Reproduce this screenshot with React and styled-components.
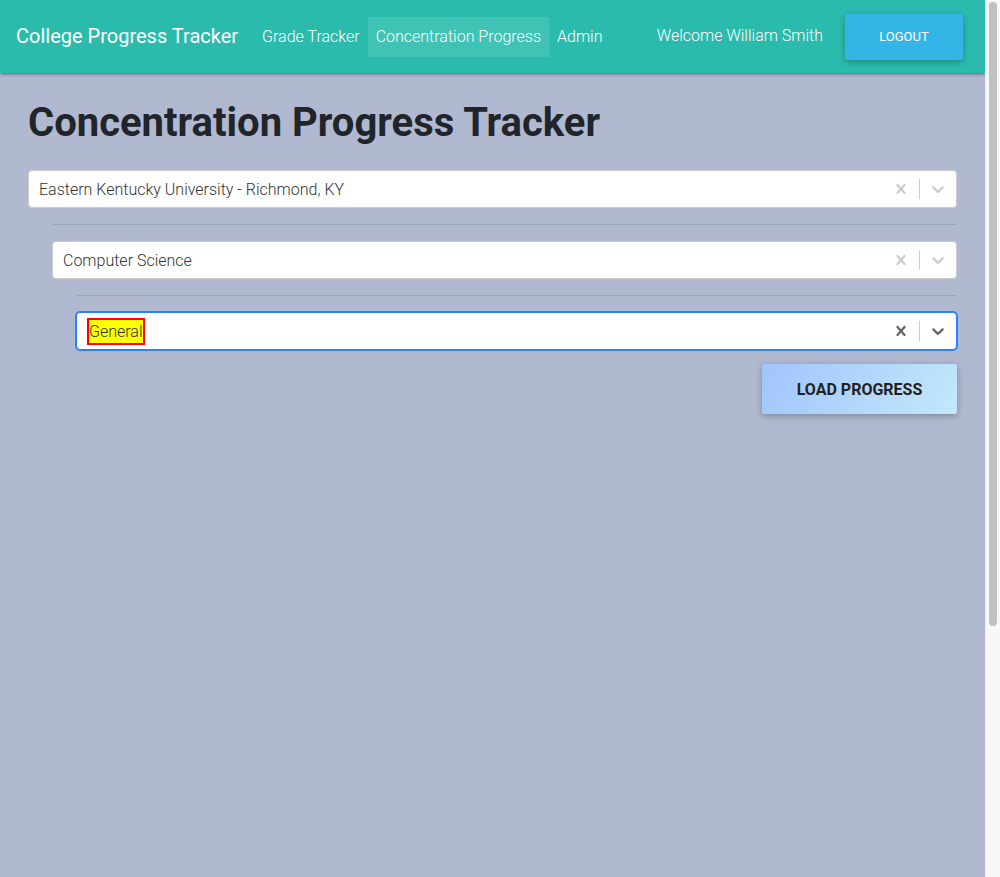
import React from "react";
import styled, { createGlobalStyle } from "styled-components";

const GlobalStyle = createGlobalStyle`
  html, body {
    margin: 0;
    padding: 0;
  }
  body {
    font-family: Roboto, "Liberation Sans", sans-serif;
    background-color: #b0b9d0;
    color: #212529;
    overflow: hidden;
  }
  * {
    box-sizing: border-box;
  }
`;

// the window shows a classic scrollbar gutter on the right
const Frame = styled.div`
  display: flex;
  height: 100vh;
`;

const Page = styled.div`
  flex: 1;
  min-width: 0;
  overflow: hidden;
  background-color: #b0b9d0;
`;

const ScrollTrack = styled.div`
  width: 15px;
  flex-shrink: 0;
  background-color: #f8f8f8;
  border-left: 1px solid #ededed;
  padding: 2px 3px 0 3px;
`;

const ScrollThumb = styled.div`
  height: 624px;
  border-radius: 4px;
  background-color: #c1c1c1;
`;

const Nav = styled.nav`
  height: 73px;
  background-color: #2bbbad;
  display: flex;
  align-items: center;
  padding: 0 22px 0 16px;
  box-shadow: 0 2px 2px 0 rgba(0, 0, 0, 0.14), 0 3px 1px -2px rgba(0, 0, 0, 0.12),
    0 1px 5px 0 rgba(0, 0, 0, 0.2);
  position: relative;
  z-index: 1;
`;

const Brand = styled.a`
  color: #fff;
  font-size: 20px;
  font-weight: 400;
  margin-right: 16px;
  text-decoration: none;
  padding-bottom: 1px;
`;

const NavLinks = styled.div`
  display: flex;
  align-items: center;
`;

const NavLink = styled.a`
  color: #fff;
  font-size: 16px;
  font-weight: 300;
  padding: 0 8px;
  height: 40px;
  line-height: 40px;
  text-decoration: none;
  background-color: ${(p) => (p.$active ? "rgba(255, 255, 255, 0.1)" : "transparent")};
`;

const Spacer = styled.div`
  flex: 1;
`;

const Welcome = styled.span`
  color: #fff;
  font-size: 16px;
  font-weight: 300;
  margin-right: 22px;
  padding-bottom: 2px;
`;

const LogoutButton = styled.button`
  width: 118px;
  height: 46px;
  border: none;
  border-radius: 2px;
  background-color: #33b5e5;
  color: #fff;
  font-family: Roboto, "Liberation Sans", sans-serif;
  font-size: 13px;
  font-weight: 400;
  text-transform: uppercase;
  box-shadow: 0 2px 5px 0 rgba(0, 0, 0, 0.16), 0 2px 10px 0 rgba(0, 0, 0, 0.12);
`;

const Main = styled.main`
  padding: 26px 28px;
`;

const Title = styled.h1`
  margin: 0 0 23px;
  font-size: 40px;
  font-weight: 700;
  line-height: 1.2;
  color: #212529;
`;

const Level = styled.div`
  margin-left: ${(p) => p.$indent}px;
`;

const Divider = styled.hr`
  margin: 16px 0;
  border: 0;
  border-top: 1px solid rgba(0, 0, 0, 0.1);
`;

const Control = styled.div`
  display: flex;
  align-items: center;
  height: 38px;
  background-color: #fff;
  border-radius: 4px;
  border: 1px solid ${(p) => (p.$focused ? "#2684ff" : "hsl(0, 0%, 80%)")};
  box-shadow: ${(p) => (p.$focused ? "0 0 0 1px #2684ff" : "none")};
`;

const ValueBox = styled.div`
  flex: 1;
  padding: 2px 8px;
  display: flex;
  align-items: center;
`;

const Value = styled.span`
  margin: 0 2px;
  font-size: 16px;
  font-weight: 300;
  color: hsl(0, 0%, 20%);
`;

const Highlight = styled.span`
  background-color: #ffff00;
  border: 2px solid #ff0000;
  padding: 2px 0;
  line-height: 19px;
`;

const Indicators = styled.div`
  display: flex;
  align-items: center;
  align-self: stretch;
`;

const IndicatorBox = styled.div`
  display: flex;
  padding: 8px;
  color: ${(p) => (p.$focused ? "hsl(0, 0%, 40%)" : "hsl(0, 0%, 80%)")};
`;

const Separator = styled.span`
  align-self: stretch;
  width: 1px;
  margin: 8px 0;
  background-color: hsl(0, 0%, 80%);
`;

const ButtonRow = styled.div`
  display: flex;
  justify-content: flex-end;
  margin-top: 14px;
`;

const LoadButton = styled.button`
  width: 195px;
  height: 50px;
  border: none;
  border-radius: 2px;
  background-image: linear-gradient(120deg, #a1c4fd 0%, #c2e9fb 100%);
  color: #212121;
  font-family: Roboto, "Liberation Sans", sans-serif;
  font-size: 16px;
  font-weight: 700;
  text-transform: uppercase;
  box-shadow: 0 2px 5px 0 rgba(0, 0, 0, 0.16), 0 2px 10px 0 rgba(0, 0, 0, 0.12);
`;

const ClearIcon = () => (
  <svg width="20" height="20" viewBox="0 0 20 20" fill="currentColor">
    <path d="M14.348 14.849c-0.469 0.469-1.229 0.469-1.697 0l-2.651-3.030-2.651 3.029c-0.469 0.469-1.229 0.469-1.697 0-0.469-0.469-0.469-1.229 0-1.697l2.758-3.15-2.759-3.152c-0.469-0.469-0.469-1.228 0-1.697s1.228-0.469 1.697 0l2.652 3.031 2.651-3.031c0.469-0.469 1.228-0.469 1.697 0s0.469 1.229 0 1.697l-2.758 3.152 2.758 3.15c0.469 0.469 0.469 1.229 0 1.698z" />
  </svg>
);

const ChevronIcon = () => (
  <svg width="20" height="20" viewBox="0 0 20 20" fill="currentColor">
    <path d="M4.516 7.548c0.436-0.446 1.043-0.481 1.576 0l3.908 3.747 3.908-3.747c0.533-0.481 1.141-0.446 1.574 0 0.436 0.445 0.408 1.197 0 1.615-0.406 0.418-4.695 4.502-4.695 4.502-0.217 0.223-0.502 0.335-0.787 0.335s-0.57-0.112-0.789-0.335c0 0-4.287-4.084-4.695-4.502s-0.436-1.17 0-1.615z" />
  </svg>
);

function Select({ children, focused }) {
  return (
    <Control $focused={focused}>
      <ValueBox>
        <Value>{children}</Value>
      </ValueBox>
      <Indicators>
        <IndicatorBox $focused={focused}>
          <ClearIcon />
        </IndicatorBox>
        <Separator />
        <IndicatorBox $focused={focused}>
          <ChevronIcon />
        </IndicatorBox>
      </Indicators>
    </Control>
  );
}

export default function App() {
  return (
    <Frame>
      <GlobalStyle />
      <Page>
        <Nav>
          <Brand href="#">College Progress Tracker</Brand>
          <NavLinks>
            <NavLink href="#">Grade Tracker</NavLink>
            <NavLink href="#" $active>
              Concentration Progress
            </NavLink>
            <NavLink href="#">Admin</NavLink>
          </NavLinks>
          <Spacer />
          <Welcome>Welcome William Smith</Welcome>
          <LogoutButton>Logout</LogoutButton>
        </Nav>
        <Main>
          <Title>Concentration Progress Tracker</Title>
          <Select>Eastern Kentucky University - Richmond, KY</Select>
          <Level $indent={24}>
            <Divider />
            <Select>Computer Science</Select>
            <Level $indent={24}>
              <Divider />
              <Select focused>
                <Highlight>General</Highlight>
              </Select>
              <ButtonRow>
                <LoadButton>Load Progress</LoadButton>
              </ButtonRow>
            </Level>
          </Level>
        </Main>
      </Page>
      <ScrollTrack>
        <ScrollThumb />
      </ScrollTrack>
    </Frame>
  );
}
